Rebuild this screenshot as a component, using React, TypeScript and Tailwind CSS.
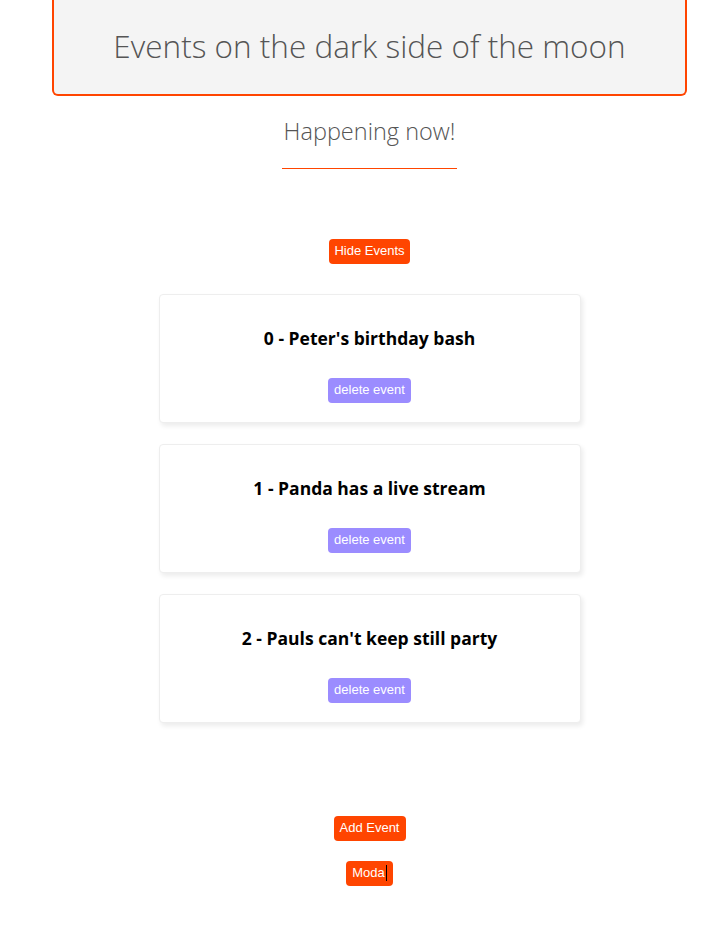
const events = [
  { id: 0, title: "Peter's birthday bash" },
  { id: 1, title: "Panda has a live stream" },
  { id: 2, title: "Pauls can't keep still party" },
];

export default function App() {
  return (
    <main className="min-h-screen bg-white pl-[13px] font-['Open_Sans',sans-serif] text-[#555]">
      <header className="mx-[39px] h-[96px] flex items-end justify-center pb-[33px] rounded-b-md border-2 border-t-0 border-[#ff4500] bg-[#f4f4f4]">
        <h1 className="text-[31.5px] font-light leading-none">Events on the dark side of the moon</h1>
      </header>

      <div className="flex justify-center mt-[24px]">
        <h2 className="text-[23.5px] font-light leading-none pb-[24px] px-[2px] border-b border-[#ff4500]">Happening now!</h2>
      </div>

      <div className="flex justify-center mt-[70px]">
        <button className="h-[25px] px-[5px] rounded bg-[#ff4500] text-white text-[13px] font-['Liberation_Sans',sans-serif]">
          Hide Events
        </button>
      </div>

      <section className="mx-auto w-[422px] mt-[30px] flex flex-col gap-[21px]">
        {events.map((e) => (
          <div key={e.id} className="h-[129px] rounded border border-[#eee] bg-white shadow-[2px_3px_5px_rgba(0,0,0,0.08)] flex flex-col items-center pt-[30px]">
            <h3 className="text-[17.5px] font-bold text-black leading-[26px]">
              {e.id} - {e.title}
            </h3>
            <button className="mt-[27px] h-[25px] px-[6px] rounded bg-[#9b8cff] text-white text-[13px] font-['Liberation_Sans',sans-serif]">
              delete event
            </button>
          </div>
        ))}
      </section>

      <div className="flex flex-col items-center mt-[93px] gap-[20px] pb-[40px]">
        <button className="h-[25px] px-[6px] rounded bg-[#ff4500] text-white text-[13px] font-['Liberation_Sans',sans-serif]">
          Add Event
        </button>
        <button className="h-[25px] px-[6px] rounded bg-[#ff4500] text-white text-[13px] font-['Liberation_Sans',sans-serif] flex items-center">
          Moda<span className="inline-block w-px h-[16px] bg-black ml-[1px]" />
        </button>
      </div>
    </main>
  );
}
